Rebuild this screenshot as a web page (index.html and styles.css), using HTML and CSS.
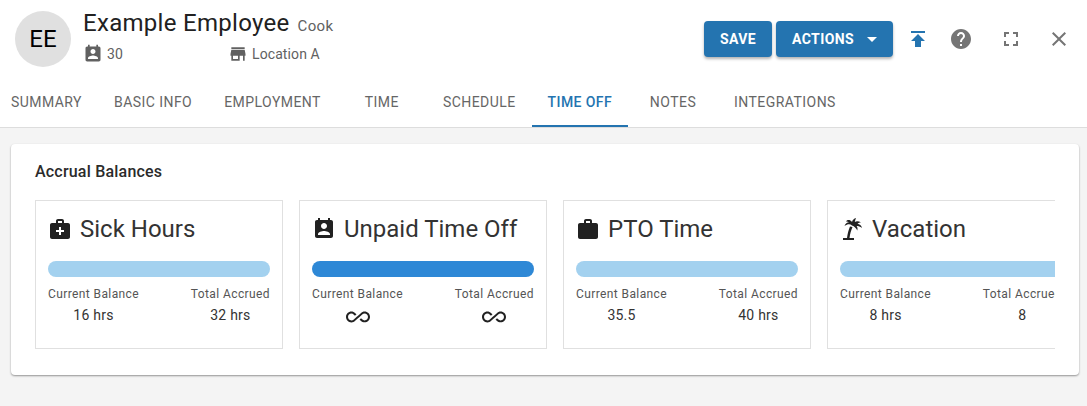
FILE: index.html
```html
<!DOCTYPE html>
<html lang="en">
<head>
<meta charset="utf-8">
<title>Example Employee</title>
<link rel="stylesheet" href="styles.css">
</head>
<body>
<header class="header">
  <div class="top">
    <div class="avatar">EE</div>
    <div class="identity">
      <div class="name-row">
        <h1 class="name">Example Employee</h1>
        <span class="role">Cook</span>
      </div>
      <div class="meta-row">
        <span class="meta meta-id">
          <svg class="meta-icon" viewBox="0 0 24 24"><path d="M19 3h-1V1h-2v2H8V1H6v2H5c-1.11 0-2 .9-2 2v14c0 1.1.89 2 2 2h14c1.1 0 2-.9 2-2V5c0-1.1-.9-2-2-2zm-7 3c1.66 0 3 1.34 3 3s-1.34 3-3 3-3-1.34-3-3 1.34-3 3-3zm6 12H6v-1c0-2 4-3.1 6-3.1s6 1.1 6 3.1v1z"/></svg>
          30
        </span>
        <span class="meta">
          <svg class="meta-icon" viewBox="0 0 24 24"><path d="M20 4H4v2h16V4zm1 10v-2l-1-5H4l-1 5v2h1v6h10v-6h4v6h2v-6h1zm-9 4H6v-4h6v4z"/></svg>
          Location A
        </span>
      </div>
    </div>
    <div class="actions">
      <button class="btn">Save</button>
      <button class="btn btn-menu">Actions <svg class="caret" viewBox="0 0 10 5"><path d="M0 0l5 5 5-5z"/></svg></button>
      <svg class="tool tool-blue" viewBox="0 0 24 24"><path d="M5 4v2h14V4H5zm0 10h4v6h6v-6h4l-7-7-7 7z"/></svg>
      <svg class="tool tool-help" viewBox="0 0 24 24"><path d="M12 2C6.48 2 2 6.48 2 12s4.48 10 10 10 10-4.48 10-10S17.52 2 12 2zm1 17h-2v-2h2v2zm2.07-7.75l-.9.92C13.45 12.9 13 13.5 13 15h-2v-.5c0-1.1.45-2.1 1.17-2.83l1.24-1.26c.37-.36.59-.86.59-1.41 0-1.1-.9-2-2-2s-2 .9-2 2H8c0-2.21 1.79-4 4-4s4 1.79 4 4c0 .88-.36 1.68-.93 2.25z"/></svg>
      <svg class="tool tool-expand" viewBox="0 0 24 24"><path d="M7 14H5v5h5v-2H7v-3zm-2-4h2V7h3V5H5v5zm12 7h-3v2h5v-5h-2v3zM14 5v2h3v3h2V5h-5z"/></svg>
      <svg class="tool tool-close" viewBox="0 0 24 24"><path d="M19 6.41L17.59 5 12 10.59 6.41 5 5 6.41 10.59 12 5 17.59 6.41 19 12 13.41 17.59 19 19 17.59 13.41 12z"/></svg>
    </div>
  </div>
  <nav class="tabs">
    <a class="tab tab-first">Summary</a>
    <a class="tab">Basic Info</a>
    <a class="tab">Employment</a>
    <a class="tab">Time</a>
    <a class="tab">Schedule</a>
    <a class="tab tab-active">Time Off</a>
    <a class="tab">Notes</a>
    <a class="tab">Integrations</a>
  </nav>
</header>
<main class="panel">
  <h2 class="panel-title">Accrual Balances</h2>
  <div class="cards">
    <section class="card">
      <div class="card-head">
        <svg class="card-icon" viewBox="0 0 24 24"><path d="M20 6h-4V4c0-1.1-.9-2-2-2h-4c-1.1 0-2 .9-2 2v2H4c-1.1 0-2 .9-2 2v12c0 1.1.9 2 2 2h16c1.1 0 2-.9 2-2V8c0-1.1-.9-2-2-2zM10 4h4v2h-4V4zm6 11h-3v3h-2v-3H8v-2h3v-3h2v3h3v2z"/></svg>
        <h3 class="card-title">Sick Hours</h3>
      </div>
      <div class="bar bar-light"></div>
      <div class="stats">
        <div class="stat"><span class="stat-label">Current Balance</span><span class="stat-value">16 hrs</span></div>
        <div class="stat"><span class="stat-label">Total Accrued</span><span class="stat-value">32 hrs</span></div>
      </div>
    </section>
    <section class="card">
      <div class="card-head">
        <svg class="card-icon" viewBox="0 0 24 24"><path d="M19 3h-1V1h-2v2H8V1H6v2H5c-1.11 0-2 .9-2 2v14c0 1.1.89 2 2 2h14c1.1 0 2-.9 2-2V5c0-1.1-.9-2-2-2zm-7 3c1.66 0 3 1.34 3 3s-1.34 3-3 3-3-1.34-3-3 1.34-3 3-3zm6 12H6v-1c0-2 4-3.1 6-3.1s6 1.1 6 3.1v1z"/></svg>
        <h3 class="card-title">Unpaid Time Off</h3>
      </div>
      <div class="bar bar-full"></div>
      <div class="stats">
        <div class="stat"><span class="stat-label">Current Balance</span><span class="stat-value"><svg class="infinity" viewBox="0 0 24 24"><path d="M18.6 6.62c-1.44 0-2.8.56-3.77 1.53L12 10.66 10.48 12h.01L7.8 14.39c-.64.64-1.49.99-2.4.99-1.87 0-3.39-1.51-3.39-3.38S3.53 8.62 5.4 8.62c.91 0 1.76.35 2.44 1.03l1.13 1 1.51-1.34L9.22 8.2C8.2 7.18 6.84 6.62 5.4 6.62 2.42 6.62 0 9.04 0 12s2.42 5.38 5.4 5.38c1.44 0 2.8-.56 3.77-1.53l2.83-2.5.01.01L13.52 12h-.01l2.69-2.39c.64-.64 1.49-.99 2.4-.99 1.87 0 3.39 1.51 3.39 3.38s-1.52 3.38-3.39 3.38c-.9 0-1.76-.35-2.44-1.03l-1.14-1.01-1.51 1.34 1.27 1.12c1.02 1.01 2.37 1.57 3.82 1.57 2.98 0 5.4-2.41 5.4-5.38s-2.42-5.37-5.4-5.37z"/></svg></span></div>
        <div class="stat"><span class="stat-label">Total Accrued</span><span class="stat-value"><svg class="infinity" viewBox="0 0 24 24"><path d="M18.6 6.62c-1.44 0-2.8.56-3.77 1.53L12 10.66 10.48 12h.01L7.8 14.39c-.64.64-1.49.99-2.4.99-1.87 0-3.39-1.51-3.39-3.38S3.53 8.62 5.4 8.62c.91 0 1.76.35 2.44 1.03l1.13 1 1.51-1.34L9.22 8.2C8.2 7.18 6.84 6.62 5.4 6.62 2.42 6.62 0 9.04 0 12s2.42 5.38 5.4 5.38c1.44 0 2.8-.56 3.77-1.53l2.83-2.5.01.01L13.52 12h-.01l2.69-2.39c.64-.64 1.49-.99 2.4-.99 1.87 0 3.39 1.51 3.39 3.38s-1.52 3.38-3.39 3.38c-.9 0-1.76-.35-2.44-1.03l-1.14-1.01-1.51 1.34 1.27 1.12c1.02 1.01 2.37 1.57 3.82 1.57 2.98 0 5.4-2.41 5.4-5.38s-2.42-5.37-5.4-5.37z"/></svg></span></div>
      </div>
    </section>
    <section class="card">
      <div class="card-head">
        <svg class="card-icon" viewBox="0 0 24 24"><path d="M20 6h-4V4c0-1.1-.9-2-2-2h-4c-1.1 0-2 .9-2 2v2H4c-1.1 0-2 .9-2 2v12c0 1.1.9 2 2 2h16c1.1 0 2-.9 2-2V8c0-1.1-.9-2-2-2zm-6 0h-4V4h4v2z"/></svg>
        <h3 class="card-title">PTO Time</h3>
      </div>
      <div class="bar bar-light"></div>
      <div class="stats">
        <div class="stat"><span class="stat-label">Current Balance</span><span class="stat-value">35.5</span></div>
        <div class="stat"><span class="stat-label">Total Accrued</span><span class="stat-value">40 hrs</span></div>
      </div>
    </section>
    <section class="card">
      <div class="card-head">
        <svg class="card-icon" viewBox="0 0 24 24"><path d="M3 21h4C7.500 17 8.500 13 10 9.500L12.500 10C11 13.500 10 17 9.500 21H14v2H3zM12 8.500C10 6.500 7.500 6.800 4.500 9 5.500 6.500 7 5.500 9 5.300 8 4.500 7 4.300 6 4.500 7.500 2.500 10 2.500 12 5 12.500 3 14 1.500 16 1 15.500 2.500 15 3.500 14.800 5 16.500 4 19 4.200 21 5.500 19.500 5.500 18.500 6 17.500 6.800 19.500 7 21.500 8.500 22 11 20 9.500 18.500 9 16.500 9 17.500 10 17.800 11.500 17.300 13.500 16 11 14.500 9.500 12 8.500z"/></svg>
        <h3 class="card-title">Vacation</h3>
      </div>
      <div class="bar bar-light"></div>
      <div class="stats">
        <div class="stat"><span class="stat-label">Current Balance</span><span class="stat-value">8 hrs</span></div>
        <div class="stat"><span class="stat-label">Total Accrued</span><span class="stat-value">8</span></div>
      </div>
    </section>
  </div>
</main>
</body>
</html>
```
FILE: styles.css
```css
* { box-sizing: border-box; }
html, body { margin: 0; height: 100%; }
body {
  background: #f4f4f4;
  font-family: Roboto, "Liberation Sans", sans-serif;
  color: #212121;
  overflow: hidden;
}
.header {
  height: 128px;
  background: #fff;
  border-bottom: 1px solid #ddd;
  display: flex;
  flex-direction: column;
  justify-content: space-between;
}
.top {
  display: flex;
  align-items: flex-start;
  padding: 11px 0 0 15px;
}
.avatar {
  width: 56px;
  height: 56px;
  border-radius: 50%;
  background: #e0e0e0;
  color: #000;
  font-size: 24px;
  display: flex;
  align-items: center;
  justify-content: center;
  flex: none;
}
.identity { margin-left: 12px; width: 300px; }
.name-row { display: flex; align-items: baseline; }
.name {
  margin: 0;
  font-size: 24px;
  line-height: 24px;
  font-weight: 400;
  letter-spacing: .3px;
}
.role { margin-left: 8px; font-size: 15px; color: #616161; letter-spacing: .3px; }
.meta-row { display: flex; margin-top: 9px; }
.meta {
  display: flex;
  align-items: center;
  gap: 4px;
  font-size: 14px;
  line-height: 20px;
  color: #616161;
  letter-spacing: .1px;
}
.meta-id { width: 145px; }
.meta-icon { width: 20px; height: 20px; fill: #616161; flex: none; }
.actions {
  margin-left: auto;
  display: flex;
  align-items: center;
  padding-top: 10px;
}
.btn {
  height: 36px;
  border: 0;
  border-radius: 4px;
  background: #2474b0;
  color: #fff;
  font: 700 14px/36px Roboto, sans-serif;
  letter-spacing: .4px;
  text-transform: uppercase;
  padding: 0 16px;
  margin-right: 4px;
  box-shadow: 0 2px 3px rgba(0,0,0,.3);
  display: flex;
  align-items: center;
}
.btn-menu { margin-right: 0; }
.caret { width: 10px; height: 5px; fill: #fff; margin-left: 13px; }
.tool { width: 24px; height: 24px; flex: none; fill: #757575; }
.tool-blue { fill: #2474b0; margin-left: 13px; }
.tool-help { margin-left: 19px; }
.tool-expand { margin-left: 26px; }
.tool-close { margin-left: 24px; margin-right: 16px; }
.tabs { display: flex; height: 48px; }
.tab {
  min-width: 90px;
  height: 48px;
  padding: 0 16px;
  display: flex;
  align-items: center;
  justify-content: center;
  font-size: 14px;
  font-weight: 400;
  letter-spacing: .45px;
  text-transform: uppercase;
  color: #666;
  border-bottom: 2px solid transparent;
}
.tab-first { padding-left: 11px; min-width: 0; }
.tab-active { color: #2474b0; border-bottom-color: #2474b0; font-weight: 500; letter-spacing: .4px; }
.panel {
  margin: 16px 8px 0 11px;
  height: 231px;
  background: #fff;
  border-radius: 4px;
  padding: 18px 24px 0;
  box-shadow: 0 1px 2px rgba(0,0,0,.4);
}
.panel-title {
  margin: 0 0 19px;
  font-size: 16px;
  line-height: 19px;
  font-weight: 500;
  letter-spacing: .2px;
  color: #2b2b2b;
}
.cards { display: flex; gap: 16px; overflow: hidden; }
.card {
  flex: 0 0 248px;
  height: 149px;
  border: 1px solid #e0e0e0;
  padding: 12px;
}
.card-head { display: flex; align-items: center; height: 32px; gap: 8px; }
.card-icon { width: 24px; height: 24px; fill: #212121; flex: none; }
.card-title { margin: 0; font-size: 24px; line-height: 32px; font-weight: 400; color: #333; }
.bar { height: 16px; border-radius: 8px; margin-top: 16px; }
.bar-light { background: #a3d1ef; }
.bar-full { background: #2e88d6; }
.stats { display: flex; justify-content: space-between; margin-top: 9px; }
.stat { display: flex; flex-direction: column; align-items: center; }
.stat-label { font-size: 12px; line-height: 16px; color: #555; letter-spacing: .4px; white-space: nowrap; }
.stat-value { font-size: 14px; line-height: 20px; margin-top: 3px; color: #333; font-weight: 400; letter-spacing: .25px; height: 20px; display: flex; align-items: center; }
.infinity { width: 24px; height: 24px; fill: #212121; margin-top: 4px; flex: none; }
```
